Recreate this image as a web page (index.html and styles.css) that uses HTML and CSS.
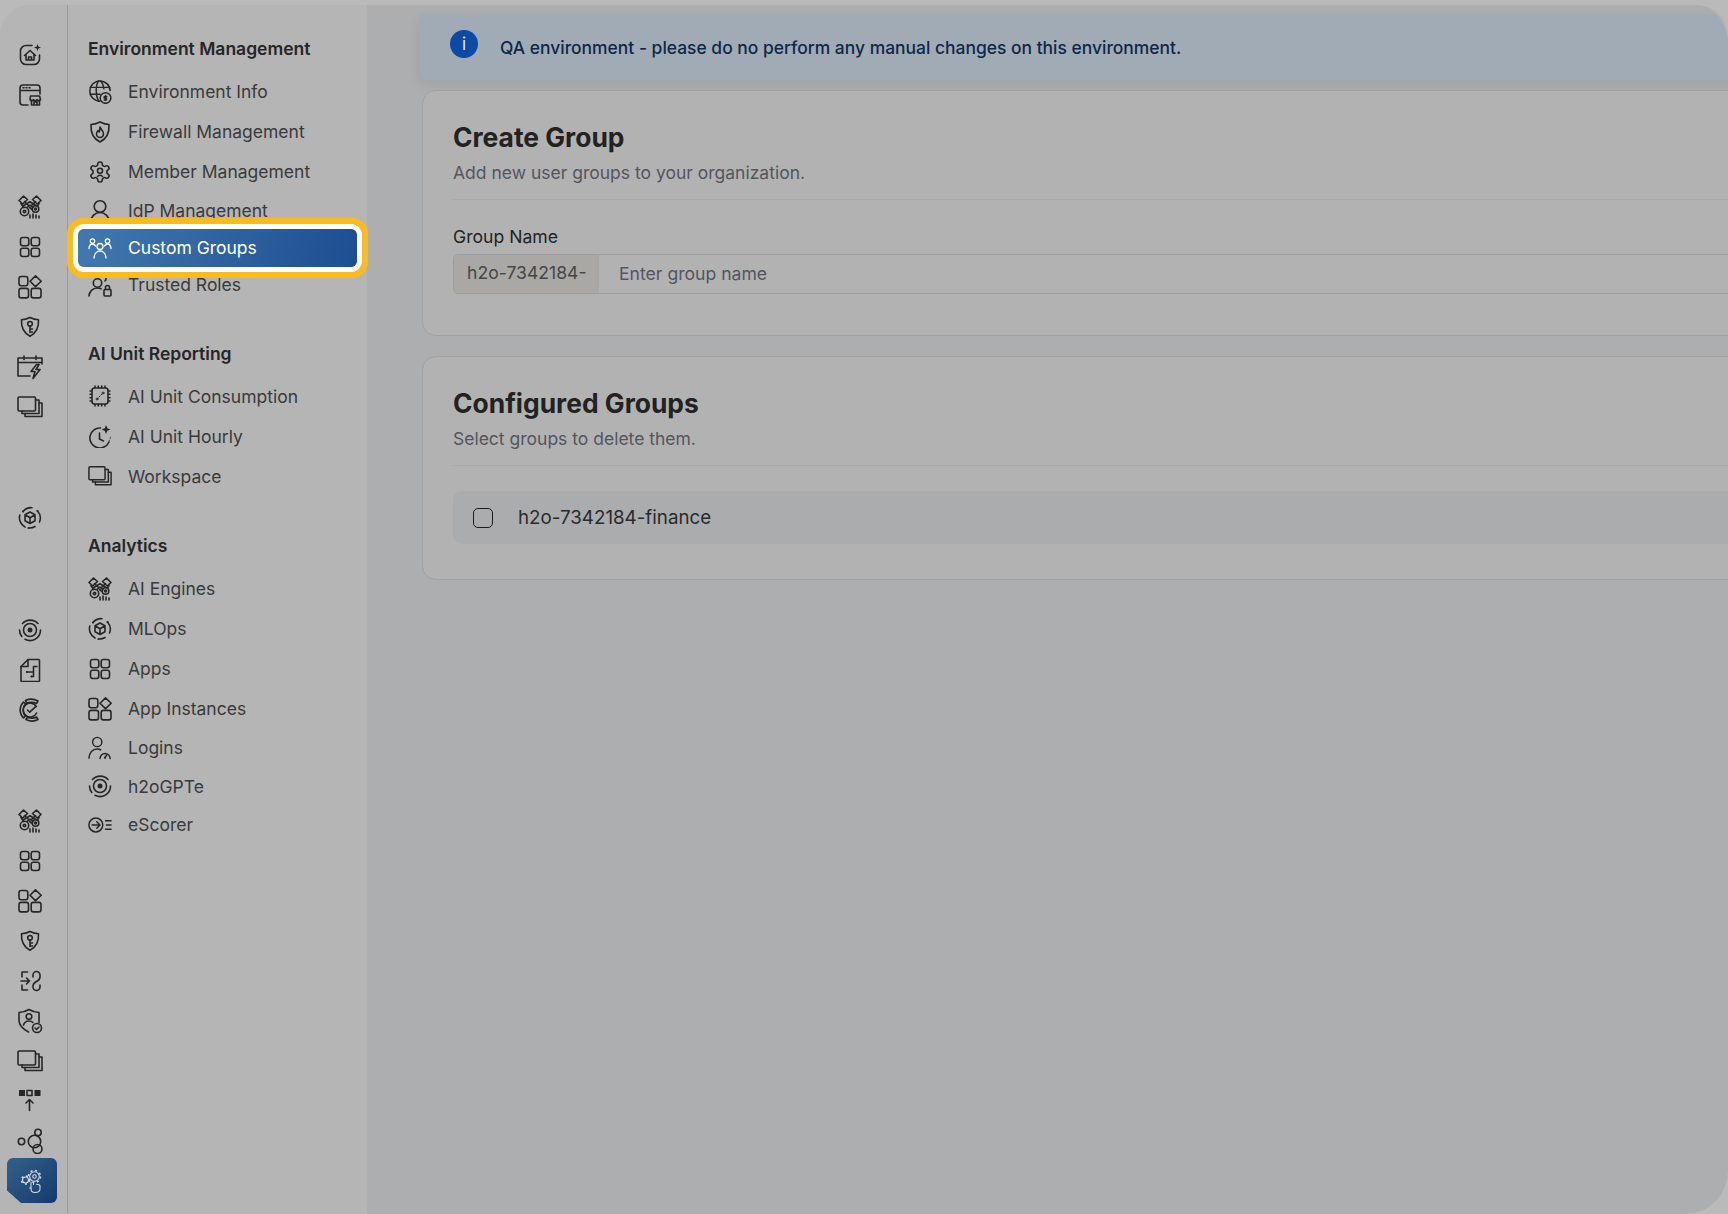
FILE: index.html
```html
<!DOCTYPE html>
<html lang="en">
<head>
<meta charset="utf-8">
<title>Custom Groups</title>
<link rel="stylesheet" href="styles.css">
</head>
<body>
<svg class="defs" width="0" height="0" aria-hidden="true">
  <symbol id="i-home" viewBox="0 0 24 24"><path d="M14 2.500H8A5.500 5.500 0 0 0 2.500 8v8A5.500 5.500 0 0 0 8 21.500h8a5.500 5.500 0 0 0 5.500-5.500v-4"/><path d="M6.500 12.500 12 7.500l5.500 5M8 11.500v5.500h8v-5.500M10.500 17v-3h3v3"/><path class="fill" d="M19.500 1l.9 2.600 2.600.9-2.600.9-.9 2.600-.9-2.600-2.600-.9 2.600-.9z"/></symbol>
  <symbol id="i-store" viewBox="0 0 24 24"><path d="M10 22H5a3 3 0 0 1-3-3V5a3 3 0 0 1 3-3h14a3 3 0 0 1 3 3v6M2 7.500h20"/><path d="M5 4.800h1M8 4.800h1M11 4.800h1"/><path d="M12.500 13h9l1 3.500a1.800 1.800 0 0 1-3.500 0 1.800 1.800 0 0 1-3.500 0 1.800 1.800 0 0 1-3.500 0zM13.500 17v5h8v-5M16 22v-3h3v3"/></symbol>
  <symbol id="i-engine" viewBox="0 0 24 24"><path d="M1 5.500 5.500 1.200 9.500 4.500 4.800 9zM23 5.500 18.500 1.200 14.500 4.500 19.200 9z"/><path d="M6.500 6.500 11 11M17.500 6.500 13 11M3 8.500l2.500 4M21 8.500l-1.500 2.500"/><path d="M5 11 12 6.800 18 10.500M9 12.500l3-2.500 3 2.500"/><circle cx="6.500" cy="16.500" r="4.200"/><circle cx="6.500" cy="16.500" r="1.200"/><circle cx="17.500" cy="14" r="3.300"/><circle cx="17.500" cy="14" r="1"/><path d="M11.500 12.500l2 1.500"/><path d="M12 23v-3M15 23v-4M18 23v-3M21 23v-2"/></symbol>
  <symbol id="i-apps" viewBox="0 0 24 24"><rect x="2.500" y="2.500" width="8.300" height="8.300" rx="2.200"/><rect x="13.200" y="2.500" width="8.300" height="8.300" rx="2.200"/><rect x="2.500" y="13.200" width="8.300" height="8.300" rx="2.200"/><rect x="13.200" y="13.200" width="8.300" height="8.300" rx="2.200"/></symbol>
  <symbol id="i-inst" viewBox="0 0 24 24"><rect x="1" y="1.500" width="8.800" height="9.300" rx="2.200"/><path d="M17.500 .9 23.200 6.250l-5.700 5.400L12 6.250z"/><rect x="1" y="13.400" width="9.500" height="9.500" rx="2.200"/><rect x="13.200" y="13.400" width="9.800" height="9.500" rx="2.200"/></symbol>
  <symbol id="i-key" viewBox="0 0 24 24"><path d="M12 2.500c3 1.500 5.500 2.200 8.500 2.300.5 7.500-2 13-8.500 16.500C5.500 17.800 3 12.300 3.500 4.800 6.500 4.700 9 4 12 2.500z"/><circle cx="12" cy="8.800" r="2.300"/><path d="M12 11v6.500M12 14h2.500M12 17h2.500"/></symbol>
  <symbol id="i-cal" viewBox="0 0 26 24"><path d="M13 21H1V3h24v6M1 7.500h24M7 1v3.500M19 1v3.500"/><path d="M19.500 9.500 14 16.500h4l-2 7 7-9h-4l3-5z"/></symbol>
  <symbol id="i-work" viewBox="0 0 26 24"><rect x="1" y="2" width="17.500" height="14" rx="1.200"/><path d="M18.500 5H22v13.500H5V16"/><path d="M22 8h3v13.500H8V18.500"/></symbol>
  <symbol id="i-mlops" viewBox="0 0 24 24"><path d="M5 5.500A10.500 10.500 0 0 1 14 1.700M19.500 5A10.500 10.500 0 0 1 21.500 16M17 20.500a10.500 10.500 0 0 1-5.500 1.500M7 21A10.500 10.500 0 0 1 1.800 9"/><path d="M12 6l5 2.800v5.900L12 17.500l-5-2.800V8.800zM7 8.800l5 2.900 5-2.900M12 11.700v5.800"/><circle class="fill" cx="5" cy="5.500" r="1.100"/><circle class="fill" cx="19.500" cy="5" r="1.100"/><circle class="fill" cx="10.500" cy="22" r="1.100"/></symbol>
  <symbol id="i-target" viewBox="0 0 24 24"><path d="M4.500 5.500A10.500 10.500 0 0 1 20 5.500M22.500 12A10.500 10.500 0 0 1 7 21.300M3.800 18.500A10.500 10.500 0 0 1 1.500 12"/><circle cx="12" cy="12" r="6.500"/><circle cx="12" cy="12" r="2.500" class="fill"/></symbol>
  <symbol id="i-doc" viewBox="0 0 24 24"><path d="M10 1.500h10.500a1 1 0 0 1 1 1v20a1 1 0 0 1-1 1H4a1 1 0 0 1-1-1V8.500z"/><path d="M10 1.500V8.500H3"/><path d="M9 14h6.500V8.500H19M13.500 18.500h2V14"/><circle class="fill" cx="9" cy="14" r="1.100"/><circle class="fill" cx="13.500" cy="18.500" r="1.100"/></symbol>
  <symbol id="i-ccheck" viewBox="0 0 24 24"><path d="M7.500 2.500C11 .8 16 .8 20 3l-1.500 2.500C15 4 11.500 4 9 5.300zM5.500 4C1 8.500 1 15.500 5.500 20L7.500 18.200C4.300 15 4.300 9 7.500 5.800zM8 21.500c4 2 8.500 2 12 0L18.500 19c-3 1.500-6 1.500-9 0z"/><path d="M18.300 8.500a7 7 0 1 0 .3 6.500"/><path d="M9.500 12l2.200 2.200 5.800-5.400"/></symbol>
  <symbol id="i-link" viewBox="0 0 24 24"><path d="M9.500 3H4v5M3 12h8.500M8.500 9l3 3-3 3M4 16v5h5.500"/><path d="M15 8V6a3.500 3.500 0 0 1 7 0v2c0 2-1.500 3.500-3.500 4.500S15 15 15 17v1a3.500 3.500 0 0 0 7 0v-2"/></symbol>
  <symbol id="i-ushield" viewBox="0 0 26 26"><path d="M12 1.500c3 1.800 6 2.800 10 3v10M12 1.500C9 3.300 6 4.300 2 4.500v8c0 5 4 8.500 9.500 11.500"/><circle cx="12" cy="8.500" r="2.800"/><path d="M6.500 17c1-3 3-4 5.500-4 1.500 0 3 .5 4 1.500"/><circle cx="20" cy="20" r="4.500"/><path d="M18 20l1.500 1.500 2.500-2.500"/></symbol>
  <symbol id="i-upload" viewBox="0 0 24 24"><rect class="fill" x="1" y="1" width="6" height="6"/><rect x="9" y="1.500" width="5" height="5"/><rect class="fill" x="16.500" y="1" width="6" height="6"/><path d="M11.500 21.500V10.500M8 14l3.500-3.500 3.500 3.500"/></symbol>
  <symbol id="i-bubbles" viewBox="0 0 26 26"><circle cx="4.500" cy="13.500" r="3.200"/><circle cx="17.500" cy="13.500" r="6.200"/><circle cx="21" cy="4.500" r="3.200"/><circle cx="20.500" cy="21" r="4.500"/></symbol>
  <symbol id="i-gears" viewBox="0 0 24 24"><circle cx="14.500" cy="7.500" r="4.800"/><circle class="teeth" cx="14.500" cy="7.500" r="6"/><circle cx="14.500" cy="7.500" r="1.800"/><circle cx="5.500" cy="11" r="3"/><circle class="teeth" cx="5.500" cy="11" r="4"/><path d="M11 13v7c0 2.500 1.800 3.500 4 3.500s5-1 5-3.500v-3c0-1-1.500-1.800-3.500-1.800M13.500 15.500V14"/><path d="M11 19H9.500"/></symbol>
  <symbol id="i-globe" viewBox="0 0 26 26"><path d="M13 23A11 11 0 1 1 24 11.500"/><path d="M2.500 8h21M2.500 15.500H13M11.500 1C8 6 8 17 11.500 23M14 1c2 2.500 3 5.500 3.200 8.500"/><circle cx="19" cy="19.500" r="5.800"/><path d="M19 16.800v5.400M20.400 17.800h-2a1 1 0 0 0 0 2h1.200a1 1 0 0 1 0 1.800h-2"/></symbol>
  <symbol id="i-fire" viewBox="0 0 24 24"><path d="M12 2c3 1.500 5.500 2.500 9 2.500.5 8-2 14-9 17.500C5 18.500 2.500 12.500 3 4.500 6.500 4.500 9 3.500 12 2z"/><path d="M12 7c.5 2 3.500 3.500 3.500 7a3.500 3.500 0 0 1-7 0c0-1.500.5-2.500 1.500-3.500.3 1 .7 1.500 1.200 1.500.6-1.500.6-3.500.8-5z"/></symbol>
  <symbol id="i-gear" viewBox="0 0 24 24"><path d="M12.220 2h-.44a2 2 0 0 0-2 2v.18a2 2 0 0 1-1 1.730l-.43.25a2 2 0 0 1-2 0l-.15-.08a2 2 0 0 0-2.730.73l-.22.38a2 2 0 0 0 .73 2.730l.15.1a2 2 0 0 1 1 1.720v.51a2 2 0 0 1-1 1.740l-.15.09a2 2 0 0 0-.73 2.730l.22.38a2 2 0 0 0 2.730.73l.15-.08a2 2 0 0 1 2 0l.43.25a2 2 0 0 1 1 1.730V20a2 2 0 0 0 2 2h.44a2 2 0 0 0 2-2v-.18a2 2 0 0 1 1-1.730l.43-.25a2 2 0 0 1 2 0l.15.08a2 2 0 0 0 2.730-.73l.22-.39a2 2 0 0 0-.73-2.730l-.15-.08a2 2 0 0 1-1-1.740v-.5a2 2 0 0 1 1-1.740l.15-.09a2 2 0 0 0 .73-2.730l-.22-.38a2 2 0 0 0-2.730-.73l-.15.08a2 2 0 0 1-2 0l-.43-.25a2 2 0 0 1-1-1.730V4a2 2 0 0 0-2-2z"/><circle cx="12" cy="10.800" r="2.500"/><path d="M9.500 16.500c.6-.8 1.500-1.200 2.500-1.200s1.900.4 2.500 1.200"/></symbol>
  <symbol id="i-user" viewBox="0 0 24 24"><circle cx="12" cy="7.500" r="5.800"/><path d="M2.500 23c.5-5.500 4.500-9.500 9.500-9.500s9 4 9.500 9.500"/></symbol>
  <symbol id="i-people" viewBox="0 0 24 24"><circle cx="12" cy="10.500" r="3"/><path d="M6 22c.3-4 2.800-7 6-7s5.700 3 6 7"/><circle cx="4.500" cy="5" r="2.200"/><circle cx="19.500" cy="5" r="2.200"/><path d="M1 12.500c.2-2.500 1.500-4.500 3.500-4.500 1.300 0 2.300.8 3 2M23 12.500c-.2-2.500-1.500-4.500-3.500-4.500-1.300 0-2.300.8-3 2"/></symbol>
  <symbol id="i-ulock" viewBox="0 0 24 24"><circle cx="9.500" cy="10" r="4.200"/><path d="M1 23c.3-4.500 3.500-8 8.500-8 1.500 0 2.700.3 3.500.8"/><path d="M11 4.500c.3-2 1.500-3.500 3.500-3.500s3.200 1.500 3.500 3.500a4 4 0 0 1-1 3.500"/><rect x="16" y="16.500" width="7" height="6.500" rx="1"/><path d="M17.500 16.500v-2a2 2 0 0 1 4 0v2"/></symbol>
  <symbol id="i-chip" viewBox="0 0 24 24"><rect x="4" y="4" width="16" height="16" rx="2.500"/><path class="thick" d="M7 1.500V4M10.300 1.500V4M13.700 1.500V4M17 1.500V4M7 20v2.500M10.300 20v2.500M13.700 20v2.500M17 20v2.500M1.500 7H4M1.500 10.300H4M1.500 13.700H4M1.500 17H4M20 7h2.500M20 10.300h2.500M20 13.700h2.500M20 17h2.500"/><path class="thin" stroke-dasharray="1.500 1.500" d="M9 15l6-6"/><circle class="thin" cx="15" cy="9" r="1"/><circle class="thin" cx="9" cy="15" r="1"/></symbol>
  <symbol id="i-clock" viewBox="0 0 24 24"><path d="M12.500 4A10 10 0 1 0 21 18"/><path d="M11.500 9v6l4 2"/><path class="thin" stroke-dasharray="1 2" d="M21 17a10 10 0 0 0 1.500-5"/><path class="fill" d="M18 1l1.300 3.200 3.200 1.300-3.200 1.300L18 10l-1.300-3.200-3.200-1.300 3.200-1.300z"/></symbol>
  <symbol id="i-ugauge" viewBox="0 0 26 26"><circle cx="10" cy="6.500" r="5"/><path d="M1 24c.3-6 4-10 9-10 1.500 0 2.800.3 3.800 1"/><path d="M13 24.500a5.500 5.500 0 0 1 11 0"/><path d="M18.500 23.500l1.700-3"/><circle class="fill" cx="18.500" cy="23.500" r="1.200"/></symbol>
  <symbol id="i-exit" viewBox="0 0 26 26"><circle cx="8.500" cy="13" r="7.500"/><path d="M4.500 13h8M9.500 9.500l3.500 3.500-3.500 3.500"/><path d="M19 8.500h6M20 13h5M19 17.500h6"/></symbol>
</svg>

<div class="app">
  <nav class="rail">
    <div class="rail-group">
      <span class="rail-item"><svg class="ic"><use href="#i-home"/></svg></span>
      <span class="rail-item"><svg class="ic"><use href="#i-store"/></svg></span>
    </div>
    <div class="rail-group">
      <span class="rail-item"><svg class="ic"><use href="#i-engine"/></svg></span>
      <span class="rail-item"><svg class="ic"><use href="#i-apps"/></svg></span>
      <span class="rail-item"><svg class="ic"><use href="#i-inst"/></svg></span>
      <span class="rail-item"><svg class="ic"><use href="#i-key"/></svg></span>
      <span class="rail-item"><svg class="ic wide"><use href="#i-cal"/></svg></span>
      <span class="rail-item"><svg class="ic wide"><use href="#i-work"/></svg></span>
    </div>
    <div class="rail-group">
      <span class="rail-item"><svg class="ic"><use href="#i-mlops"/></svg></span>
    </div>
    <div class="rail-group">
      <span class="rail-item"><svg class="ic"><use href="#i-target"/></svg></span>
      <span class="rail-item"><svg class="ic"><use href="#i-doc"/></svg></span>
      <span class="rail-item"><svg class="ic"><use href="#i-ccheck"/></svg></span>
    </div>
    <div class="rail-group">
      <span class="rail-item"><svg class="ic"><use href="#i-engine"/></svg></span>
      <span class="rail-item"><svg class="ic"><use href="#i-apps"/></svg></span>
      <span class="rail-item"><svg class="ic"><use href="#i-inst"/></svg></span>
      <span class="rail-item"><svg class="ic"><use href="#i-key"/></svg></span>
      <span class="rail-item"><svg class="ic"><use href="#i-link"/></svg></span>
      <span class="rail-item"><svg class="ic wide"><use href="#i-ushield"/></svg></span>
      <span class="rail-item"><svg class="ic wide"><use href="#i-work"/></svg></span>
      <span class="rail-item"><svg class="ic"><use href="#i-upload"/></svg></span>
      <span class="rail-item"><svg class="ic wide"><use href="#i-bubbles"/></svg></span>
      <span class="rail-item rail-active"><svg class="ic"><use href="#i-gears"/></svg></span>
    </div>
  </nav>

  <aside class="sidebar">
    <section class="nav-section">
      <h3 class="nav-title">Environment Management</h3>
      <a class="nav-row"><svg class="ic"><use href="#i-globe"/></svg><span>Environment Info</span></a>
      <a class="nav-row"><svg class="ic"><use href="#i-fire"/></svg><span>Firewall Management</span></a>
      <a class="nav-row"><svg class="ic"><use href="#i-gear"/></svg><span>Member Management</span></a>
      <a class="nav-row tight"><svg class="ic"><use href="#i-user"/></svg><span>IdP Management</span></a>
      <a class="nav-row tight nav-active"><svg class="ic"><use href="#i-people"/></svg><span>Custom Groups</span></a>
      <a class="nav-row tighter"><svg class="ic"><use href="#i-ulock"/></svg><span>Trusted Roles</span></a>
    </section>
    <section class="nav-section">
      <h3 class="nav-title">AI Unit Reporting</h3>
      <a class="nav-row"><svg class="ic"><use href="#i-chip"/></svg><span>AI Unit Consumption</span></a>
      <a class="nav-row"><svg class="ic"><use href="#i-clock"/></svg><span>AI Unit Hourly</span></a>
      <a class="nav-row"><svg class="ic"><use href="#i-work"/></svg><span>Workspace</span></a>
    </section>
    <section class="nav-section">
      <h3 class="nav-title">Analytics</h3>
      <a class="nav-row"><svg class="ic"><use href="#i-engine"/></svg><span>AI Engines</span></a>
      <a class="nav-row"><svg class="ic"><use href="#i-mlops"/></svg><span>MLOps</span></a>
      <a class="nav-row"><svg class="ic"><use href="#i-apps"/></svg><span>Apps</span></a>
      <a class="nav-row"><svg class="ic"><use href="#i-inst"/></svg><span>App Instances</span></a>
      <a class="nav-row tight"><svg class="ic"><use href="#i-ugauge"/></svg><span>Logins</span></a>
      <a class="nav-row tight"><svg class="ic"><use href="#i-target"/></svg><span>h2oGPTe</span></a>
      <a class="nav-row tight"><svg class="ic"><use href="#i-exit"/></svg><span>eScorer</span></a>
    </section>
  </aside>

  <main class="main">
    <div class="content">
      <div class="banner">
        <span class="info-dot">i</span>
        <p class="banner-text">QA environment - please do no perform any manual changes on this environment.</p>
      </div>
      <section class="card">
        <h2 class="card-title">Create Group</h2>
        <p class="card-sub">Add new user groups to your organization.</p>
        <hr class="card-rule">
        <label class="field-label">Group Name</label>
        <div class="field">
          <span class="field-prefix">h2o-7342184-</span>
          <span class="field-input">Enter group name</span>
        </div>
      </section>
      <section class="card card-list">
        <h2 class="card-title">Configured Groups</h2>
        <p class="card-sub">Select groups to delete them.</p>
        <hr class="card-rule">
        <div class="group-row">
          <span class="check"></span>
          <span class="group-name">h2o-7342184-finance</span>
        </div>
      </section>
    </div>
  </main>
</div>
</body>
</html>
```
FILE: styles.css
```css
* { box-sizing: border-box; }
html, body { margin: 0; height: 100%; }
body {
  background: #bababa;
  font-family: Inter, "Liberation Sans", sans-serif;
  overflow: hidden;
  padding-top: 5px;
}
.defs { display: block; height: 0; }
.app {
  display: flex;
  height: 1209px;
  background: #b5b5b5;
  border-radius: 30px 30px 43px 0;
  overflow: hidden;
}
.ic {
  width: 24px;
  height: 24px;
  flex: none;
  fill: none;
  stroke: #262626;
  stroke-width: 1.6;
  stroke-linecap: round;
  stroke-linejoin: round;
}
.ic.wide { width: 26px; height: 26px; }
.fill { fill: #262626; stroke: none; }
.thin { stroke-width: .9; }
.thick { stroke-width: 1.6; stroke-linecap: butt; }
.teeth { stroke-width: 1.6; stroke-dasharray: 2 2.700; stroke-linecap: butt; }

.rail {
  width: 68px;
  flex: none;
  padding-top: 30px;
  border-right: 1px solid #9b9b9b;
  display: flex;
  flex-direction: column;
  gap: 71.500px;
}
.rail-group { display: flex; flex-direction: column; }
.rail-item {
  height: 40px;
  display: flex;
  align-items: center;
  justify-content: center;
  padding-right: 8px;
}
.rail-active {
  width: 50px;
  height: 45px;
  margin: -3px 0 0 7px;
  padding-right: 0;
  background: linear-gradient(135deg, #34608a, #133a6e);
  border-radius: 6px;
  clip-path: polygon(0 0, 100% 0, 100% 100%, 28% 100%, 0 72%);
}
.rail-active .ic { stroke: #cfd8e2; stroke-width: 1.1; }
.rail-active .teeth { stroke-width: 1.3; }

.sidebar {
  width: 299px;
  flex: none;
  padding: 32px 0 0 20px;
  display: flex;
  flex-direction: column;
  gap: 38px;
}
.nav-section { display: flex; flex-direction: column; }
.nav-title {
  margin: 0 0 10.500px;
  height: 24px;
  font-size: 17.500px;
  line-height: 24px;
  font-weight: 600;
  color: #262626;
}
.nav-row {
  height: 40px;
  display: flex;
  align-items: center;
  gap: 16px;
  font-size: 17.500px;
  color: #3a3a3c;
}
.nav-row.tight { height: 38.500px; }
.nav-row.tighter { height: 38px; }
.nav-active {
  position: relative;
  z-index: 2;
  width: 279px;
  height: 43px;
  margin: -1.500px 0 -1.500px -10px;
  padding-left: 10px;
  color: #fff;
  border-radius: 6px;
  background: linear-gradient(100deg, #4179ae, #1e4e92);
  box-shadow: 0 0 0 5px #fff, 0 0 0 11px #fbbb1f;
}
.nav-active .ic { stroke: #fff; stroke-width: 1.3; }

.main {
  flex: 1;
  min-width: 0;
  background: #adaeb0;
  overflow: hidden;
  padding: 10px 0 0 55px;
  border-radius: 0 30px 43px 0 / 0 40px 43px 0;
}
.content { width: 1400px; display: flex; flex-direction: column; }
.banner {
  height: 65px;
  margin: 0 0 10px -3px;
  padding: 15px 0 0 31px;
  display: flex;
  gap: 22px;
  background: #a0abb6;
  border-radius: 6px;
  box-shadow: 0 4px 14px rgba(0, 0, 0, .08);
}
.info-dot {
  width: 28px;
  height: 28px;
  flex: none;
  border-radius: 50%;
  background: #0d4aa6;
  color: #dfe7f3;
  font-size: 17px;
  line-height: 28px;
  text-align: center;
}
.banner-text {
  margin: 6px 0 0;
  font-size: 17.450px;
  line-height: 24px;
  font-weight: 500;
  color: #0f2748;
}
.card {
  height: 246px;
  margin-bottom: 20px;
  padding: 29px 30px;
  background: #b2b2b2;
  border: 1px solid #a2a2a3;
  border-radius: 14px;
}
.card-list { height: 224px; }
.card-title {
  margin: 0;
  font-size: 26.400px;
  line-height: 34px;
  font-weight: 700;
  color: #222;
}
.card-sub {
  margin: 6.500px 0 0;
  font-size: 17.500px;
  line-height: 24px;
  color: #54555f;
}
.card-rule {
  margin: 14.500px 0 25px;
  border: 0;
  border-top: 1px solid #a9a9a9;
}
.field-label {
  display: block;
  font-size: 17.600px;
  line-height: 24px;
  color: #222;
}
.field {
  margin-top: 5px;
  height: 40px;
  display: flex;
  align-items: center;
  border: 1px solid #9c9da1;
  border-radius: 5px;
  font-size: 17.600px;
}
.field-prefix {
  width: 145px;
  height: 100%;
  padding: 0 0 3px 13px;
  display: flex;
  align-items: center;
  background: #a9a8a5;
  color: #45464a;
  border-radius: 4px 0 0 4px;
}
.field-input {
  padding-left: 20px;
  padding-bottom: 1px;
  color: #54555f;
}
.group-row {
  height: 53px;
  display: flex;
  align-items: center;
  padding-left: 20px;
  gap: 25px;
  background: #abacae;
  border-radius: 9px;
}
.check {
  width: 20px;
  height: 20px;
  border: 1px solid #1d1d1d;
  border-radius: 5px;
}
.group-name {
  font-size: 18.750px;
  color: #2a2a2c;
}
```
